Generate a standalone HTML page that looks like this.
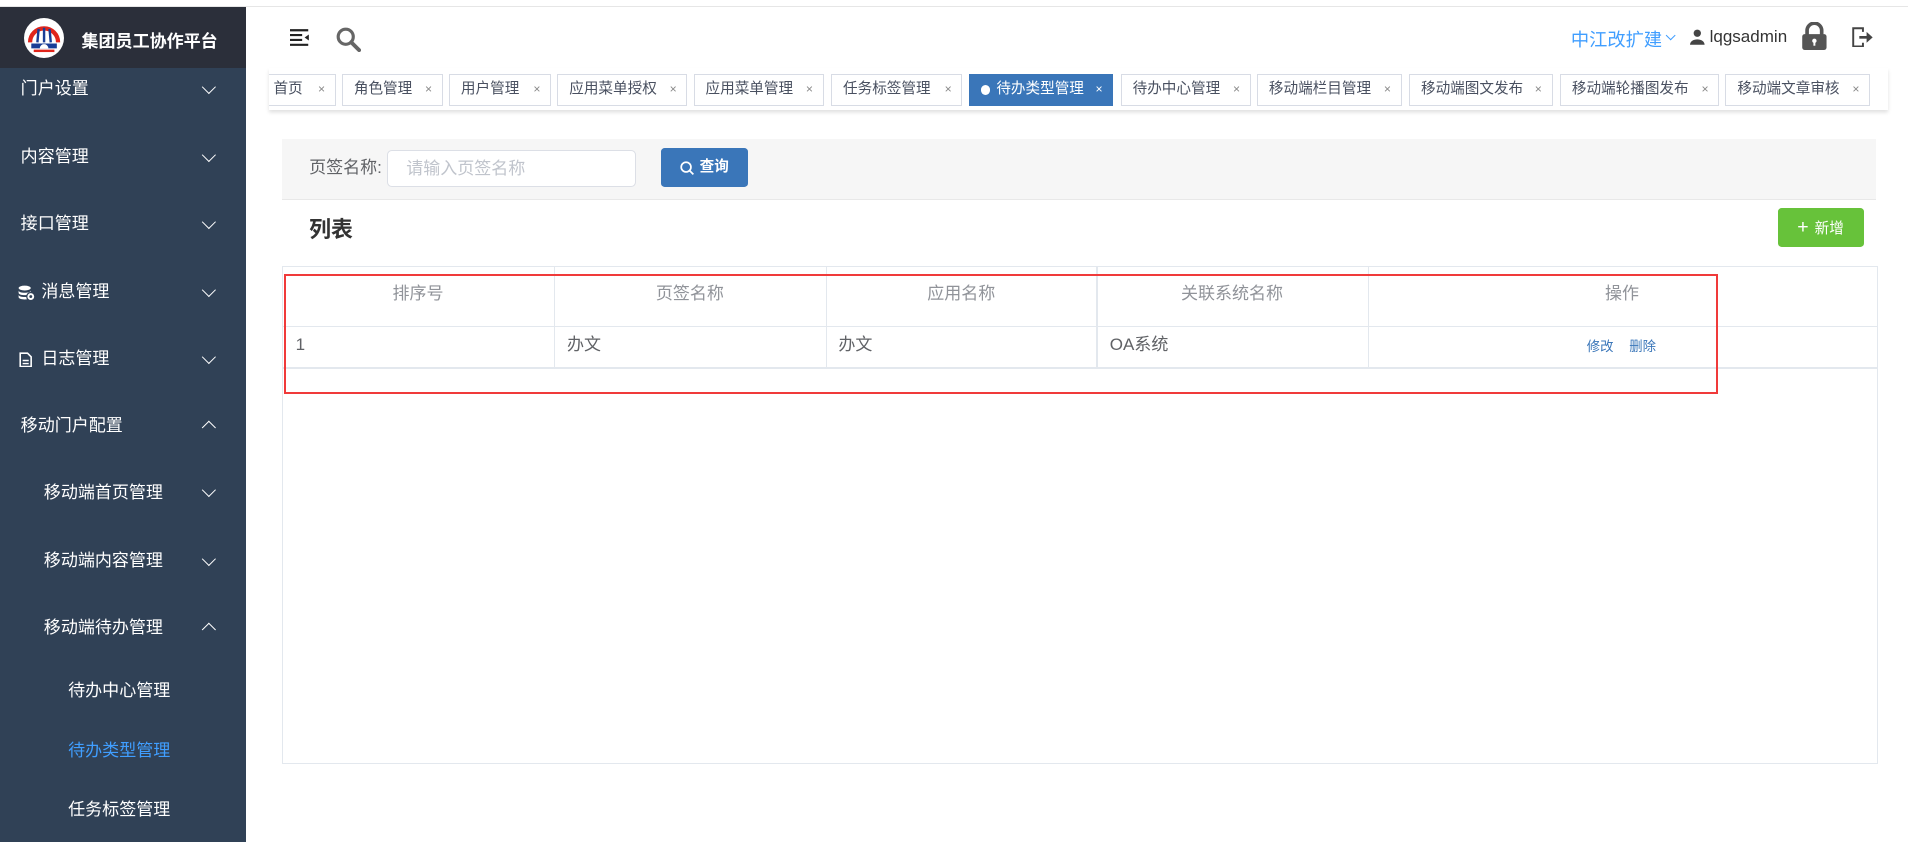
<!DOCTYPE html>
<html><head><meta charset="utf-8">
<style>
html{zoom:1.2168}
*{margin:0;padding:0;box-sizing:border-box}
body{width:1568px;height:692px;overflow:hidden;background:#fff;font-family:"Liberation Sans","Noto Sans CJK SC",sans-serif;position:relative}
.a{position:absolute}
.side{left:0;top:6px;width:202px;height:686px;background:#304156;overflow:hidden}
.logo{left:0;top:0;width:202px;height:50px;background:#2b2f3a}
.mi{position:absolute;left:0;width:202px;color:#fff;font-size:14px;line-height:20px}
.mi .chev{position:absolute;left:168px;top:4px;width:8px;height:8px;border-right:1.3px solid #fff;border-bottom:1.3px solid #fff;transform:rotate(45deg)}
.mi .chev.up{transform:rotate(-135deg);top:8px}
.nav{left:221px;top:6px;width:1331px;height:50px;background:#fff}
.tabs{left:221px;top:56px;width:1331px;height:34px;background:#fff;box-shadow:0 2px 3px rgba(0,0,0,.12);overflow:hidden}
.tab{position:absolute;top:5px;height:26px;border:1px solid #d8dce5;background:#fff;color:#495060;font-size:12px;line-height:24px;padding-left:9px;white-space:nowrap}
.tab i{font-style:normal;position:absolute;right:8px;top:0;font-size:10px;color:#888}
.tab.on{background:#3a76b9;border-color:#3a76b9;color:#fff}
.tab.on i{color:#fff}
.th{color:#909399;font-size:14px;text-align:center;top:232px;line-height:20px}
.td{color:#606266;font-size:14px;top:274px;line-height:20px}
.vl{position:absolute;top:219px;width:1px;height:83px;background:#e3e8ee}
</style></head><body>
<div class="a" style="left:0;top:5px;width:1568px;height:1px;background:#e6e6e6"></div>
<div class="a side">
  <div class="a logo">
    <div class="a" style="left:20px;top:9px;width:33px;height:33px;border-radius:50%;background:#fff;overflow:hidden">
      <svg width="33" height="33" viewBox="0 0 33 33"><path d="M5 20 A11.5 11.5 0 0 1 28 20" fill="none" stroke="#e0251b" stroke-width="3.5"/><path d="M12 9 L11 20 M16.5 8 L16.5 20 M21 9 L22 20" stroke="#1a3d96" stroke-width="2"/><path d="M6 21 H27 V25 H6Z" fill="#1a3d96"/><path d="M13 25 A3.5 3.5 0 0 1 20 25" fill="#fff"/><rect x="8" y="26" width="17" height="2" fill="#e0251b"/></svg>
    </div>
    <div class="a" style="left:67px;top:16px;color:#fff;font-weight:bold;font-size:14px">集团员工协作平台</div>
  </div>
  <div class="mi" style="top:57px"><span class="a" style="left:17px">门户设置</span><span class="chev"></span></div>
  <div class="mi" style="top:113px"><span class="a" style="left:17px">内容管理</span><span class="chev"></span></div>
  <div class="mi" style="top:168px"><span class="a" style="left:17px">接口管理</span><span class="chev"></span></div>
  <div class="mi" style="top:224px">
    <svg class="a" style="left:15px;top:4px" width="14" height="13" viewBox="0 0 14 13"><ellipse cx="5.5" cy="2.5" rx="5" ry="2" fill="#fff"/><path d="M0.5 4.5 c0 2.5 10 2.5 10 0 v2 c0 2.5 -10 2.5 -10 0z M0.5 8 c0 2.5 10 2.5 10 0 v2 c0 2.5 -10 2.5 -10 0z" fill="#fff"/><circle cx="10.5" cy="9.5" r="3.3" fill="#fff" stroke="#304156" stroke-width="1"/><circle cx="10.5" cy="9.5" r="1.2" fill="#304156"/></svg>
    <span class="a" style="left:34px">消息管理</span><span class="chev"></span></div>
  <div class="mi" style="top:279px">
    <svg class="a" style="left:16px;top:4px" width="11" height="13" viewBox="0 0 11 13"><path d="M1 1 H7 L10 4 V12 H1Z" fill="none" stroke="#fff" stroke-width="1.3"/><path d="M3 7 H8 M3 9.5 H8" stroke="#fff" stroke-width="1.2"/></svg>
    <span class="a" style="left:34px">日志管理</span><span class="chev"></span></div>
  <div class="mi" style="top:334px"><span class="a" style="left:17px">移动门户配置</span><span class="chev up"></span></div>
  <div class="mi" style="top:389px"><span class="a" style="left:36px">移动端首页管理</span><span class="chev"></span></div>
  <div class="mi" style="top:445px"><span class="a" style="left:36px">移动端内容管理</span><span class="chev"></span></div>
  <div class="mi" style="top:500px"><span class="a" style="left:36px">移动端待办管理</span><span class="chev up"></span></div>
  <div class="mi" style="top:552px"><span class="a" style="left:56px">待办中心管理</span></div>
  <div class="mi" style="top:601px;color:#409eff"><span class="a" style="left:56px">待办类型管理</span></div>
  <div class="mi" style="top:650px"><span class="a" style="left:56px">任务标签管理</span></div>
</div>
<div class="a nav">
  <svg class="a" style="left:17px;top:18px" width="17" height="14" viewBox="0 0 17 14"><path d="M0 1 H15 M0 5 H10 M0 9 H10 M0 13 H15" stroke="#222" stroke-width="1.8"/><path d="M15.5 4.5 L12 7 L15.5 9.5Z" fill="#222"/></svg>
  <svg class="a" style="left:55px;top:16px" width="21" height="21" viewBox="0 0 21 21"><circle cx="8" cy="8" r="6.2" fill="none" stroke="#666" stroke-width="2.6"/><path d="M12.5 12.5 L19 19" stroke="#666" stroke-width="3.2" stroke-linecap="round"/></svg>
  <div class="a" style="left:1070px;top:15px;color:#409eff;font-size:15px">中江改扩建</div>
  <div class="a" style="left:1149px;top:20px;width:6px;height:6px;border-right:1px solid #409eff;border-bottom:1px solid #409eff;transform:rotate(45deg)"></div>
  <svg class="a" style="left:1168px;top:18px" width="12" height="13" viewBox="0 0 12 13"><circle cx="6" cy="3.5" r="3" fill="#444"/><path d="M0 13 C0 7 12 7 12 13Z" fill="#444"/></svg>
  <div class="a" style="left:1184px;top:16px;color:#333;font-size:14px">lqgsadmin</div>
  <svg class="a" style="left:1259px;top:12px" width="22" height="24" viewBox="0 0 22 24"><path d="M5 11 V7 A6 6 0 0 1 17 7 V11" fill="none" stroke="#555" stroke-width="3"/><rect x="1" y="10" width="20" height="13" rx="2" fill="#555"/><circle cx="11" cy="15.5" r="1.8" fill="#fff"/><rect x="10.2" y="16" width="1.6" height="3.5" fill="#fff"/></svg>
  <svg class="a" style="left:1301px;top:16px" width="18" height="17" viewBox="0 0 18 17"><path d="M9 4 V1 H1 V16 H9 V13" fill="none" stroke="#444" stroke-width="1.6"/><path d="M6 8.5 H13" stroke="#444" stroke-width="2.2"/><path d="M12 4 L17 8.5 L12 13Z" fill="#444"/></svg>
</div>
<div class="a tabs">
  <div class="tab" style="left:-8px;width:63px;padding-left:11px">首页<i>×</i></div>
  <div class="tab" style="left:60px;width:83px">角色管理<i>×</i></div>
  <div class="tab" style="left:148px;width:84px">用户管理<i>×</i></div>
  <div class="tab" style="left:237px;width:107px">应用菜单授权<i>×</i></div>
  <div class="tab" style="left:349px;width:107px">应用菜单管理<i>×</i></div>
  <div class="tab" style="left:462px;width:108px">任务标签管理<i>×</i></div>
  <div class="tab on" style="left:575px;width:119px;padding-left:22px"><span class="a" style="left:9px;top:8px;width:8px;height:8px;border-radius:50%;background:#fff"></span>待办类型管理<i>×</i></div>
  <div class="tab" style="left:700px;width:107px">待办中心管理<i>×</i></div>
  <div class="tab" style="left:812px;width:119px">移动端栏目管理<i>×</i></div>
  <div class="tab" style="left:937px;width:118px">移动端图文发布<i>×</i></div>
  <div class="tab" style="left:1061px;width:131px">移动端轮播图发布<i>×</i></div>
  <div class="tab" style="left:1197px;width:119px">移动端文章审核<i>×</i></div>
</div>
<div class="a" style="left:232px;top:114px;width:1310px;height:50px;background:#f6f6f6;border-bottom:1px solid #e8e8e8"></div>
<div class="a" style="left:254px;top:128px;color:#606266;font-size:14px;line-height:20px">页签名称:</div>
<div class="a" style="left:318px;top:123px;width:205px;height:31px;background:#fff;border:1px solid #dcdfe6;border-radius:4px;color:#c0c4cc;font-size:14px;line-height:29px;padding-left:15px">请输入页签名称</div>
<div class="a" style="left:543px;top:122px;width:72px;height:32px;background:#3a76b9;border-radius:3px;color:#fff;font-size:12px;font-weight:bold;line-height:32px;padding-left:32px">
  <svg class="a" style="left:16px;top:10px" width="12" height="12" viewBox="0 0 12 12"><circle cx="5" cy="5" r="4" fill="none" stroke="#fff" stroke-width="1.4"/><path d="M8 8 L11 11" stroke="#fff" stroke-width="1.4"/></svg>查询</div>
<div class="a" style="left:254px;top:175px;color:#333;font-size:18px;font-weight:bold">列表</div>
<div class="a" style="left:1461px;top:171px;width:71px;height:32px;background:#67c23a;border-radius:3px;color:#fff;font-size:12px;line-height:32px;padding-left:16px"><span style="font-size:16px;margin-right:5px">+</span>新增</div>
<div class="a" style="left:232px;top:219px;width:1311px;height:409px;border:1px solid #e3e8ee"></div>
<div class="a" style="left:232px;top:268px;width:1311px;height:1px;background:#e3e8ee"></div>
<div class="a" style="left:232px;top:302px;width:1311px;height:1px;background:#e3e8ee"></div>
<div class="vl" style="left:455px"></div><div class="vl" style="left:679px"></div><div class="vl" style="left:901px"></div><div class="vl" style="left:1124px"></div>
<div class="a th" style="left:232px;width:223px">排序号</div>
<div class="a th" style="left:455px;width:224px">页签名称</div>
<div class="a th" style="left:679px;width:222px">应用名称</div>
<div class="a th" style="left:901px;width:223px">关联系统名称</div>
<div class="a th" style="left:1124px;width:418px">操作</div>
<div class="a td" style="left:243px">1</div>
<div class="a td" style="left:466px">办文</div>
<div class="a td" style="left:689px">办文</div>
<div class="a td" style="left:912px">OA系统</div>
<div class="a" style="left:1304px;top:277px;color:#3a76b9;font-size:11px;line-height:16px">修改</div>
<div class="a" style="left:1339px;top:277px;color:#3a76b9;font-size:11px;line-height:16px">删除</div>
<div class="a" style="left:233px;top:225px;width:1179px;height:99px;border:2px solid #f03a3a"></div>
</body></html>
